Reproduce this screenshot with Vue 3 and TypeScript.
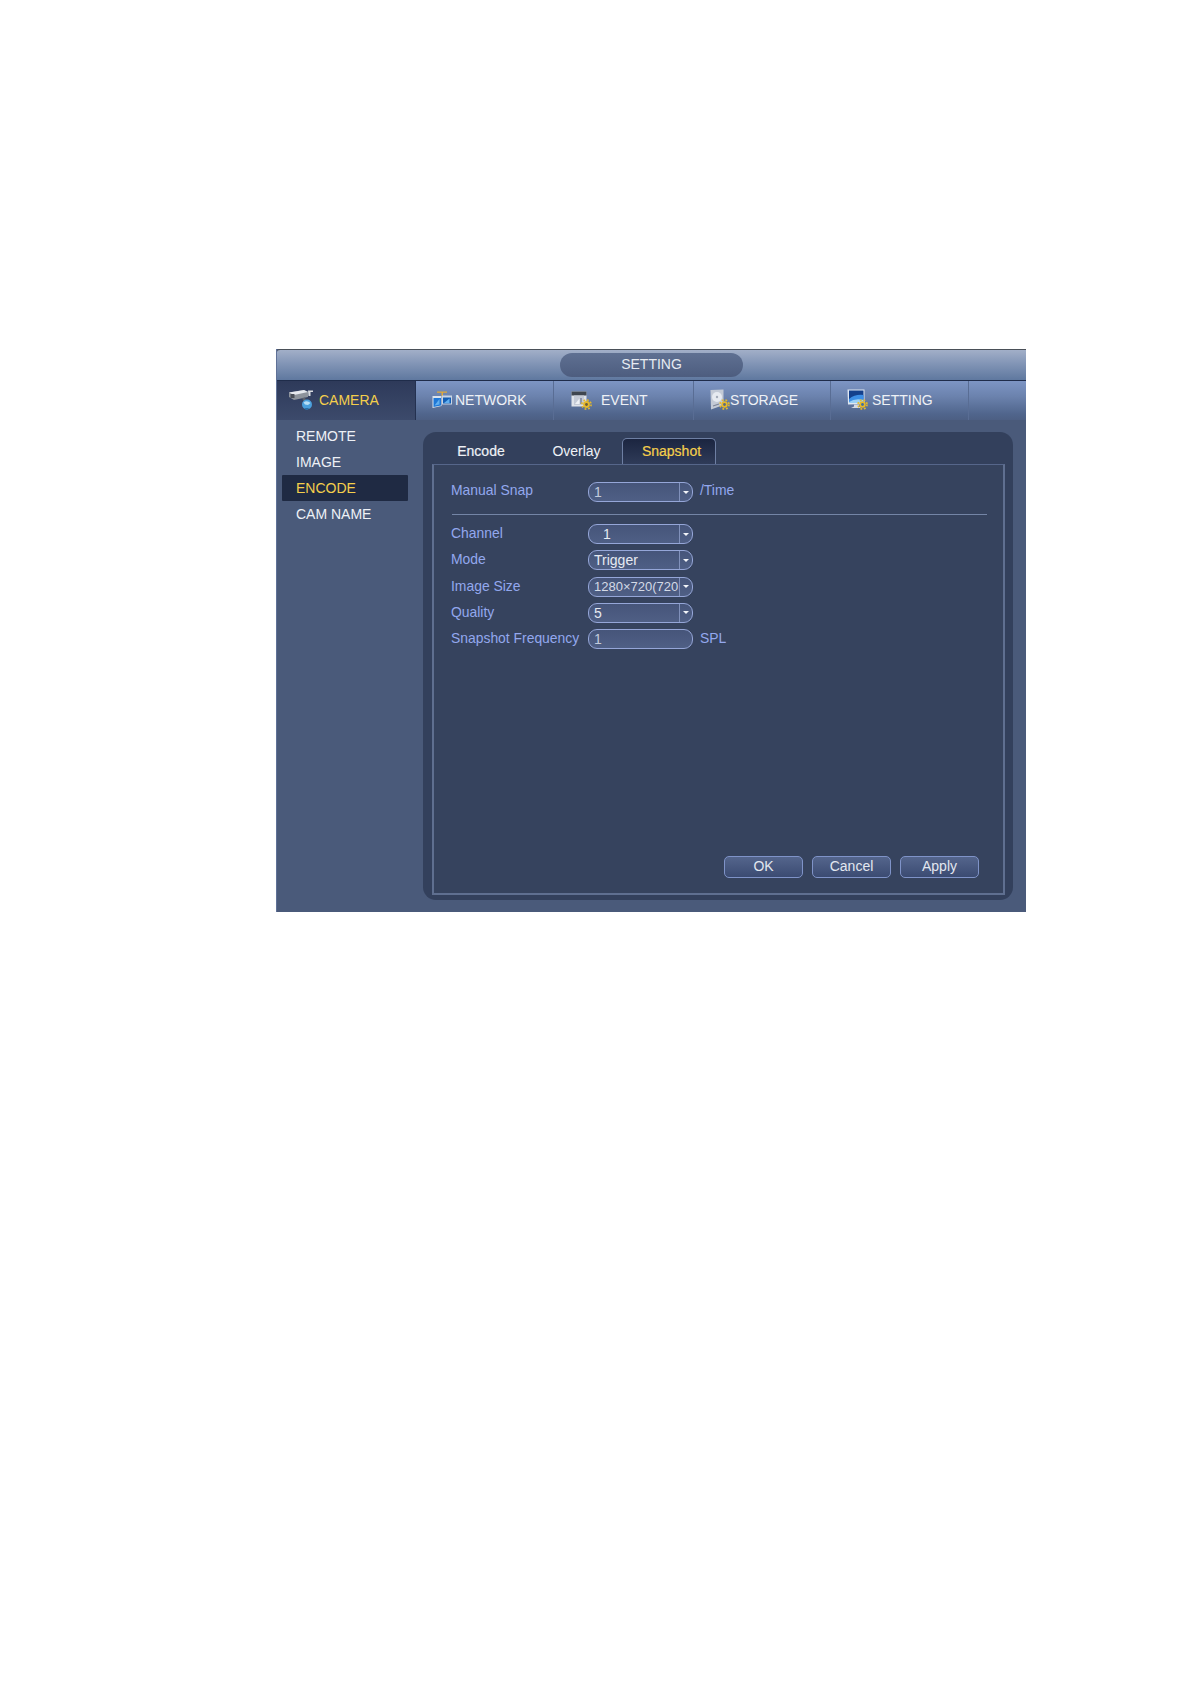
<script setup lang="ts">
const menu = [
  { label: 'REMOTE', active: false },
  { label: 'IMAGE', active: false },
  { label: 'ENCODE', active: true },
  { label: 'CAM NAME', active: false },
]
const rows = [
  { label: 'Channel', value: '1', cls: 'v-indent' },
  { label: 'Mode', value: 'Trigger', cls: '' },
  { label: 'Image Size', value: '1280×720(720P)', cls: 'v-small' },
  { label: 'Quality', value: '5', cls: '' },
]
</script>

<template>
  <div class="page">
    <section class="panel">
      <header class="title">
        <div class="pill">SETTING</div>
      </header>

      <nav class="nav">
        <div class="nav-item nav-camera">
          <svg class="ic" width="24" height="21" viewBox="0 0 24 21">
            <path d="M0 3.5 L15 1 L19 3 L19 8 L5 11 L0 8 Z" fill="#8d939b" />
            <path d="M0 3.5 L15 1 L19 3 L5 6 Z" fill="#e6e9ee" />
            <rect x="1.5" y="5" width="4" height="4" fill="#4a4f58" />
            <path d="M19 1.5 H24 V3 H21.5 V7 H19.5 Z" fill="#d8dbe0" />
            <path d="M13 9 L15 13 L17 12 L16 8.5 Z" fill="#5d626b" />
            <circle cx="18" cy="15.5" r="5" fill="#4a9fdc" />
            <path d="M14.5 13.5 Q18 11 21.5 14 L19 16 L16 15.5 Z" fill="#b6def5" />
            <path d="M16 19 H20 L18.5 21 H16.5 Z" fill="#2c6da3" />
          </svg>
          <span>CAMERA</span>
        </div>
        <div class="nav-item nav-network">
          <svg class="ic" width="20" height="17" viewBox="0 0 20 17">
            <path d="M5 0.5 H15 V1.8 H11 V5 H9.5 V1.8 H5 Z" fill="#e0a93a" />
            <path d="M0.5 5 H9.5 V15 L0.5 17 Z" fill="#dbe4ee" />
            <path d="M10 4.5 H20 V13.5 H10 Z" fill="#c9d5e4" />
            <path d="M1.5 7 H9 V14.5 L1.5 16 Z" fill="#1f78d8" />
            <path d="M11 6.5 H19 V12.5 H11 Z" fill="#155fb5" />
            <path d="M2.5 14.5 L7.5 8 V13.5 Z M12 12 L17.5 7.5 V12 Z" fill="#62b0f0" />
          </svg>
          <span>NETWORK</span>
        </div>
        <div class="nav-item nav-event">
          <svg class="ic" width="21" height="20" viewBox="0 0 21 20">
            <rect x="0.5" y="1.5" width="15" height="15" fill="#dfe3e9" />
            <rect x="0.5" y="1.5" width="15" height="4" fill="#3f4650" />
            <path d="M3 5.5 H13 V15 H3 Z" fill="#c4cad6" />
            <path d="M4 14 L8.5 8.5 V14 Z" fill="#eef1f5" />
            <path d="M10 8 V14" stroke="#77819a" stroke-width="1.4" />
            <circle cx="15.5" cy="14.5" r="3.4" fill="#e6b92a" />
            <circle cx="15.5" cy="14.5" r="4.6" fill="none" stroke="#e6b92a" stroke-width="1.6" stroke-dasharray="1.8 1.8" />
            <circle cx="15.5" cy="14.5" r="1.4" fill="#6b5f3a" />
          </svg>
          <span>EVENT</span>
        </div>
        <div class="nav-item nav-storage">
          <svg class="ic" width="20" height="21" viewBox="0 0 20 21">
            <path d="M0.5 1 L13.5 0.5 V16 L1 20.5 Z" fill="#c3cad6" />
            <circle cx="7" cy="8" r="5" fill="#e6eaf0" />
            <circle cx="7" cy="8" r="1.2" fill="#a3abb9" />
            <path d="M3 17 L9 15" stroke="#7b8496" stroke-width="1.3" />
            <circle cx="14.5" cy="15.5" r="3.2" fill="#e6b92a" />
            <circle cx="14.5" cy="15.5" r="4.5" fill="none" stroke="#e6b92a" stroke-width="1.6" stroke-dasharray="1.8 1.8" />
            <circle cx="14.5" cy="15.5" r="1.4" fill="#5d6a80" />
          </svg>
          <span>STORAGE</span>
        </div>
        <div class="nav-item nav-setting">
          <svg class="ic" width="21" height="21" viewBox="0 0 21 21">
            <path d="M0.5 0.5 H17.5 V15 L1 15.5 Z" fill="#dfe7f2" />
            <path d="M2 1.5 H16.5 V14 H2 Z" fill="#14408c" />
            <path d="M2 10 Q8 5 16.5 6 V14 H2 Z" fill="#3d8fe6" />
            <path d="M2 13 Q8 9 16.5 11 V14 H2 Z" fill="#9ad0f5" />
            <path d="M7 15.5 H12 V17.5 L14 19 H4 L7 17.5 Z" fill="#d5dae3" />
            <circle cx="15.5" cy="15.5" r="3.2" fill="#e6b92a" />
            <circle cx="15.5" cy="15.5" r="4.5" fill="none" stroke="#e6b92a" stroke-width="1.6" stroke-dasharray="1.8 1.8" />
            <circle cx="15.5" cy="15.5" r="1.4" fill="#3c6fa8" />
          </svg>
          <span>SETTING</span>
        </div>
      </nav>

      <div class="body">
        <aside class="side">
          <div
            v-for="item in menu"
            :key="item.label"
            class="side-item"
            :class="{ on: item.active }"
          >{{ item.label }}</div>
        </aside>

        <main class="work">
          <div class="tabs">
            <div class="tab t-encode">Encode</div>
            <div class="tab t-overlay">Overlay</div>
            <div class="tab t-snap">Snapshot</div>
          </div>
          <div class="box">
            <div class="row first">
              <label class="lab">Manual Snap</label>
              <div class="sel">
                <span class="val v-dim">1</span>
                <span class="drop"><i></i></span>
              </div>
              <span class="lab after">/Time</span>
            </div>
            <div class="rule"></div>
            <div class="list">
              <div v-for="r in rows" :key="r.label" class="row">
                <label class="lab">{{ r.label }}</label>
                <div class="sel">
                  <span class="val" :class="r.cls">{{ r.value }}</span>
                  <span class="drop"><i></i></span>
                </div>
              </div>
              <div class="row">
                <label class="lab">Snapshot Frequency</label>
                <div class="sel inp"><span class="val v-dim">1</span></div>
                <span class="lab after">SPL</span>
              </div>
            </div>
            <div class="foot">
              <button class="btn">OK</button>
              <button class="btn">Cancel</button>
              <button class="btn">Apply</button>
            </div>
          </div>
        </main>
      </div>
    </section>
  </div>
</template>

<style scoped>
.page {
  width: 1190px;
  height: 1684px;
  box-sizing: border-box;
  padding: 349px 0 0 276px;
  background: #fff;
  font-family: "Liberation Sans", Arial, sans-serif;
  font-size: 14px;
}
.panel {
  width: 750px;
  height: 563px;
  display: flex;
  flex-direction: column;
  background: #4a5a7a;
  border-left: 1px solid #5f7197;
  box-sizing: border-box;
}
.title {
  height: 32px;
  flex: none;
  box-sizing: border-box;
  border-top: 1px solid #4a5058;
  border-bottom: 1px solid #1f2c4a;
  background: linear-gradient(#a2afc8 0%, #8295b6 45%, #5f789f 100%);
  display: flex;
  justify-content: center;
  padding: 3px 0;
  border-top-left-radius: 3px;
}
.pill {
  width: 183px;
  height: 24px;
  border-radius: 12px;
  background: linear-gradient(#5f7092, #4d5d7f);
  color: #e6eaf2;
  text-align: center;
  line-height: 23px;
}
.nav {
  height: 39px;
  flex: none;
  display: flex;
  background: linear-gradient(#7d95c4 0%, #6b82ad 40%, #50658c 85%, #4d5f83 100%);
  color: #eef1f6;
}
.nav-item {
  display: flex;
  align-items: center;
  box-sizing: border-box;
  border-right: 1px solid #596d94;
  flex: none;
  padding-bottom: 2px;
}
.nav-item span { display: block; }
.nav-camera {
  width: 139px;
  padding-left: 12px;
  gap: 6px;
  color: #f4cf4c;
  background: linear-gradient(#2e3a5a, #3c4a6b);
  border-right-color: #243150;
}
.nav-network { width: 138px; padding-left: 16px; gap: 3px; }
.nav-event { width: 140px; padding-left: 17px; gap: 9px; }
.nav-storage { width: 137px; padding-left: 16px; gap: 0; }
.nav-setting { width: 138px; padding-left: 16px; gap: 4px; }
.ic { flex: none; }
.body {
  flex: 1;
  min-height: 0;
  display: flex;
  padding: 0 13px 12px 0;
  background: #4a5a7a;
}
.side {
  width: 146px;
  flex: none;
  padding: 3px 0 0 5px;
  box-sizing: border-box;
}
.side-item {
  width: 126px;
  height: 26px;
  line-height: 26px;
  box-sizing: border-box;
  padding-left: 14px;
  color: #eef1f6;
}
.side-item.on {
  background: #1f2a43;
  color: #f4cf4c;
  border-radius: 1px;
}
.work {
  flex: 1;
  min-width: 0;
  margin-top: 12px;
  display: flex;
  flex-direction: column;
  background: #33405c;
  border-radius: 13px;
  padding: 6px 8px 5px 9px;
}
.tabs {
  display: flex;
  height: 26px;
  flex: none;
}
.tab {
  text-align: center;
  line-height: 26px;
  color: #eef1f6;
  box-sizing: border-box;
}
.t-encode { width: 98px; -webkit-text-stroke: 0.2px #eef1f6; }
.t-overlay { width: 92px; padding-left: 1px; }
.t-snap {
  width: 94px;
  padding-left: 5px;
  color: #f4cf4c;
  line-height: 24px;
  border: 1px solid #6e7fa3;
  border-bottom: 0;
  border-radius: 5px 5px 0 0;
  background: linear-gradient(#1b2540, #2f3b58);
  -webkit-text-stroke: 0.2px #f4cf4c;
}
.box {
  flex: 1;
  min-height: 0;
  display: flex;
  flex-direction: column;
  box-sizing: border-box;
  border: 2px solid #5f6f90;
  border-top: 1px solid #56668a;
  background: #36435e;
  padding: 17px 8px 13px 18px;
}
.row {
  display: flex;
  align-items: center;
  height: 20px;
}
.lab {
  display: block;
  width: 136px;
  flex: none;
  color: #93a8ee;
  font-size: 13.9px;
  margin-top: -2px;
  margin-left: -1px;
  white-space: nowrap;
}
.first .lab { margin-top: -4px; }
.lab + .sel { margin-left: 1px; }
.lab.after {
  width: auto;
  margin-left: 7px;
}
.sel {
  width: 105px;
  height: 20px;
  flex: none;
  box-sizing: border-box;
  display: flex;
  border: 1.5px solid #95a6d8;
  border-radius: 9px;
  background: linear-gradient(#46557a, #4f5f85);
  overflow: hidden;
}
.val {
  flex: 1;
  min-width: 0;
  overflow: hidden;
  white-space: nowrap;
  padding-left: 5px;
  line-height: 18px;
  color: #e6eaf2;
}
.v-dim { color: #c2cbdc; }
.v-indent { padding-left: 14px; }
.v-small { font-size: 13px; color: #d4dae6; }
.drop {
  width: 13px;
  flex: none;
  box-sizing: border-box;
  border-left: 1px solid #8191bb;
  display: flex;
  align-items: center;
  justify-content: center;
}
.drop i {
  display: block;
  width: 0;
  height: 0;
  border-left: 3px solid transparent;
  border-right: 3px solid transparent;
  border-top: 3px solid #f2f4f8;
}
.rule {
  height: 1px;
  margin: 12px 8px 9px 0;
  background: #7485a6;
  flex: none;
}
.list {
  display: flex;
  flex-direction: column;
  gap: 6.3px;
}
.foot {
  margin-top: auto;
  margin-right: 16px;
  margin-bottom: 2px;
  display: flex;
  justify-content: flex-end;
  gap: 9px;
}
.btn {
  width: 79px;
  height: 22px;
  padding: 0 0 2px;
  box-sizing: border-box;
  border: 1.5px solid #7f93c8;
  border-radius: 5px;
  background: linear-gradient(#54658c, #3b4b72);
  color: #e2e7f0;
  font: inherit;
  line-height: 16px;
}
</style>
